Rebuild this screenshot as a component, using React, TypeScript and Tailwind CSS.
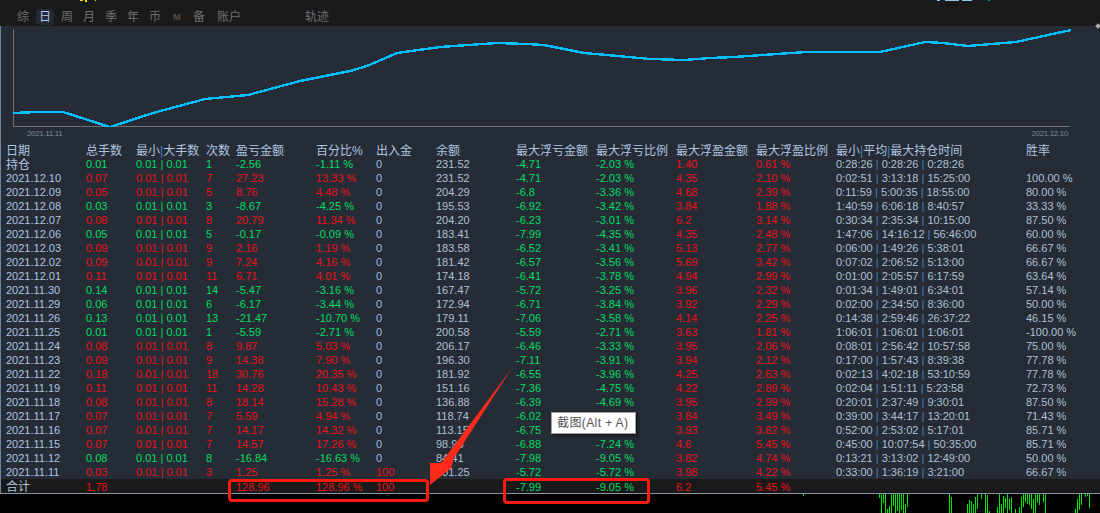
import React from "react";

const rows = [
  ["2021.12.10", "0.07", "7", "27.23", "13.33 %", "0", "231.52", "-4.71", "-2.03 %", "4.35", "2.10 %", "0:02:51 | 3:13:18 | 15:25:00", "100.00 %"],
  ["2021.12.09", "0.05", "5", "8.76", "4.48 %", "0", "204.29", "-6.8", "-3.36 %", "4.68", "2.39 %", "0:11:59 | 5:00:35 | 18:55:00", "80.00 %"],
  ["2021.12.08", "0.03", "3", "-8.67", "-4.25 %", "0", "195.53", "-6.92", "-3.42 %", "3.84", "1.88 %", "1:40:59 | 6:06:18 | 8:40:57", "33.33 %"],
  ["2021.12.07", "0.08", "8", "20.79", "11.34 %", "0", "204.20", "-6.23", "-3.01 %", "6.2", "3.14 %", "0:30:34 | 2:35:34 | 10:15:00", "87.50 %"],
  ["2021.12.06", "0.05", "5", "-0.17", "-0.09 %", "0", "183.41", "-7.99", "-4.35 %", "4.35", "2.48 %", "1:47:06 | 14:16:12 | 56:46:00", "60.00 %"],
  ["2021.12.03", "0.09", "9", "2.16", "1.19 %", "0", "183.58", "-6.52", "-3.41 %", "5.13", "2.77 %", "0:06:00 | 1:49:26 | 5:38:01", "66.67 %"],
  ["2021.12.02", "0.09", "9", "7.24", "4.16 %", "0", "181.42", "-6.57", "-3.56 %", "5.69", "3.42 %", "0:07:02 | 2:06:52 | 5:13:00", "66.67 %"],
  ["2021.12.01", "0.11", "11", "6.71", "4.01 %", "0", "174.18", "-6.41", "-3.78 %", "4.94", "2.99 %", "0:01:00 | 2:05:57 | 6:17:59", "63.64 %"],
  ["2021.11.30", "0.14", "14", "-5.47", "-3.16 %", "0", "167.47", "-5.72", "-3.25 %", "3.96", "2.32 %", "0:01:34 | 1:49:01 | 6:34:01", "57.14 %"],
  ["2021.11.29", "0.06", "6", "-6.17", "-3.44 %", "0", "172.94", "-6.71", "-3.84 %", "3.92", "2.29 %", "0:02:00 | 2:34:50 | 8:36:00", "50.00 %"],
  ["2021.11.26", "0.13", "13", "-21.47", "-10.70 %", "0", "179.11", "-7.06", "-3.58 %", "4.14", "2.25 %", "0:14:38 | 2:59:46 | 26:37:22", "46.15 %"],
  ["2021.11.25", "0.01", "1", "-5.59", "-2.71 %", "0", "200.58", "-5.59", "-2.71 %", "3.63", "1.81 %", "1:06:01 | 1:06:01 | 1:06:01", "-100.00 %"],
  ["2021.11.24", "0.08", "8", "9.87", "5.03 %", "0", "206.17", "-6.46", "-3.33 %", "3.95", "2.06 %", "0:08:01 | 2:56:42 | 10:57:58", "75.00 %"],
  ["2021.11.23", "0.09", "9", "14.38", "7.90 %", "0", "196.30", "-7.11", "-3.91 %", "3.94", "2.12 %", "0:17:00 | 1:57:43 | 8:39:38", "77.78 %"],
  ["2021.11.22", "0.18", "18", "30.76", "20.35 %", "0", "181.92", "-6.55", "-3.96 %", "4.25", "2.63 %", "0:02:13 | 4:02:18 | 53:10:59", "77.78 %"],
  ["2021.11.19", "0.11", "11", "14.28", "10.43 %", "0", "151.16", "-7.36", "-4.75 %", "4.22", "2.89 %", "0:02:04 | 1:51:11 | 5:23:58", "72.73 %"],
  ["2021.11.18", "0.08", "8", "18.14", "15.28 %", "0", "136.88", "-6.39", "-4.69 %", "3.95", "2.99 %", "0:20:01 | 2:37:49 | 9:30:01", "87.50 %"],
  // the tooltip hides the max-loss ratio on the next two rows
  ["2021.11.17", "0.07", "7", "5.59", "4.94 %", "0", "118.74", "-6.02", "", "3.84", "3.49 %", "0:39:00 | 3:44:17 | 13:20:01", "71.43 %"],
  ["2021.11.16", "0.07", "7", "14.17", "14.32 %", "0", "113.15", "-6.75", "", "3.93", "3.62 %", "0:52:00 | 2:53:02 | 5:17:01", "85.71 %"],
  ["2021.11.15", "0.07", "7", "14.57", "17.26 %", "0", "98.96", "-6.88", "-7.24 %", "4.6", "5.45 %", "0:45:00 | 10:07:54 | 50:35:00", "85.71 %"],
  ["2021.11.12", "0.08", "8", "-16.84", "-16.63 %", "0", "84.41", "-7.98", "-9.05 %", "3.82", "4.74 %", "0:13:21 | 3:13:02 | 12:49:00", "50.00 %"],
  ["2021.11.11", "0.03", "3", "1.25", "1.25 %", "100", "101.25", "-5.72", "-5.72 %", "3.98", "4.22 %", "0:33:00 | 1:36:19 | 3:21:00", "66.67 %"],
];

const headers = ["日期", "总手数", "最小|大手数", "次数", "盈亏金额", "百分比%", "出入金", "余额", "最大浮亏金额", "最大浮亏比例", "最大浮盈金额", "最大浮盈比例", "最小|平均|最大持仓时间", "胜率"];
const tabs = ["综", "日", "周", "月", "季", "年", "币", "M", "备"];

const gridCols = "grid grid-cols-[80px_50px_70px_30px_80px_60px_60px_80px_80px_80px_80px_80px_190px_1fr] pl-[5px] h-[14px] leading-[14px] whitespace-nowrap";
const RED = "text-[#ea1018]";
const GREEN = "text-[#00dc64]";
const PALE = "text-[#b0c0d4]";

// x, top, bottom of the little green bars under the table
const bars = [
  [803, 494, 496], [879, 494, 498], [881, 494, 513], [883, 494, 503], [885, 494, 513], [887, 509, 513], [889, 506, 513], [891, 494, 513],
  [893, 494, 506], [895, 494, 513], [897, 494, 511], [899, 494, 513], [901, 494, 510], [903, 494, 513], [905, 504, 513], [907, 494, 507],
  [949, 494, 513], [951, 497, 513], [967, 504, 513], [969, 500, 513], [971, 501, 513], [973, 504, 513], [975, 497, 513], [977, 494, 509],
  [981, 494, 499], [985, 494, 513], [987, 495, 513], [989, 511, 513], [997, 507, 513], [999, 494, 513], [1001, 504, 513], [1003, 496, 513],
  [1005, 498, 508], [1007, 494, 513], [1009, 499, 510], [1011, 497, 513], [1015, 509, 513], [1019, 507, 513], [1021, 497, 513], [1023, 494, 507],
  [1025, 494, 502], [1027, 494, 504], [1029, 494, 505], [1031, 494, 509], [1033, 499, 513], [1035, 494, 513], [1037, 494, 503], [1039, 494, 505],
  [1043, 494, 502], [1045, 494, 513], [1075, 509, 513], [1077, 499, 513], [1079, 494, 510], [1081, 494, 505], [1085, 494, 497], [1087, 494, 496], [1089, 494, 508],
];

const linePoints = "13,113 38,112 63,112 110,127 153,113 205,99 248,95 300,81 350,71 367,66 397,53 440,47 497,43 527,44 544,45 584,53 607,55 650,59 684,60 710,58 734,57 806,52 880,52 925,42 943,43 968,46 1016,42 1071,30";

function Piped({ value, sep }: { value: string; sep: string }) {
  const parts = value.split(sep);
  return (
    <span>
      {parts.map((p, i) => (
        <React.Fragment key={i}>
          {i > 0 && <span className="text-[#4a80bd]">{sep}</span>}
          {p}
        </React.Fragment>
      ))}
    </span>
  );
}

function Row({ r }: { r: string[] }) {
  const pnl = r[3].startsWith("-") ? GREEN : RED;
  return (
    <div className={gridCols}>
      <span className="text-[#b0c4e0]">{r[0]}</span>
      <span className={pnl}>{r[1]}</span>
      <span className={pnl}>0.01 | 0.01</span>
      <span className={pnl}>{r[2]}</span>
      <span className={pnl}>{r[3]}</span>
      <span className={pnl}>{r[4]}</span>
      <span className={r[5] === "0" ? "text-[#9cbce4]" : RED}>{r[5]}</span>
      <span className={PALE}>{r[6]}</span>
      <span className={GREEN}>{r[7]}</span>
      <span className={GREEN}>{r[8]}</span>
      <span className={RED}>{r[9]}</span>
      <span className={RED}>{r[10]}</span>
      <span className={PALE}>
        <Piped value={r[11]} sep=" | " />
      </span>
      <span className={PALE}>{r[12]}</span>
    </div>
  );
}

export default function App() {
  return (
    <div className="relative w-[1100px] h-[513px] overflow-hidden bg-black flex flex-col text-[11px] font-['Liberation_Sans','Noto_Sans_CJK_SC',sans-serif]">
      {/* ---------- top tabs ---------- */}
      <div className="h-[26px] bg-[#1a1a1a] flex items-end pl-[17px] pb-[1px] text-[12px] leading-[16px] text-[#6f6f6f]">
        {tabs.map((t) =>
          t === "日" ? (
            <span key={t} className="w-[18px] -mx-[3px] mr-[7px] h-[16px] text-center rounded-sm bg-[#212a35] text-[#b4c8e4]">{t}</span>
          ) : t === "M" ? (
            <span key={t} className="w-[12px] mr-[10px] text-center text-[9px] font-bold text-[#5a5048]">{t}</span>
          ) : (
            <span key={t} className="w-[12px] mr-[10px]">{t}</span>
          )
        )}
        <span className="ml-[2px]">账户</span>
        <span className="ml-[64px]">轨迹</span>
      </div>

      {/* ---------- body ---------- */}
      <div className="h-[467px] bg-[#252c35] border-l border-[#6f84a3] flex flex-col">
        <svg viewBox="1 26 1099 101" className="w-[1099px] h-[101px] shrink-0" shapeRendering="crispEdges">
          <path d="M13 29V126.5H1070" fill="none" stroke="#727272" strokeWidth="1" />
          <polyline points={linePoints} fill="none" stroke="#00bfff" strokeWidth="2.4" />
        </svg>
        <div className="h-[16px] flex justify-between pl-[26px] pr-[32px] text-[8px] leading-[14px] tracking-[-0.35px] text-[#7b8796]">
          <span>2021.11.11</span>
          <span>2021.12.10</span>
        </div>

        <div className={gridCols + " text-[12px] text-[#b0c4e0] [&>span]:leading-[16px]"}>
          {headers.map((h) => (
            <Piped key={h} value={h} sep="|" />
          ))}
        </div>

        <div className={gridCols}>
          <span className="text-[12px] leading-[16px] text-[#b0c4e0]">持仓</span>
          <span className={GREEN}>0.01</span>
          <span className={GREEN}>0.01 | 0.01</span>
          <span className={GREEN}>1</span>
          <span className={GREEN}>-2.56</span>
          <span className={GREEN}>-1.11 %</span>
          <span className="text-[#9cbce4]">0</span>
          <span className={PALE}>231.52</span>
          <span className={GREEN}>-4.71</span>
          <span className={GREEN}>-2.03 %</span>
          <span className={RED}>1.40</span>
          <span className={RED}>0.61 %</span>
          <span className={PALE}>
            <Piped value="0:28:26 | 0:28:26 | 0:28:26" sep=" | " />
          </span>
          <span />
        </div>

        {rows.map((r) => (
          <Row key={r[0]} r={r} />
        ))}

        {/* total row */}
        <div className={gridCols + " bg-[#1a1a1a] [&>span]:leading-[16px]"}>
          <span className="text-[12px] text-[#b0c4e0]">合计</span>
          <span className={RED}>1.78</span>
          <span />
          <span />
          <span className={RED}>128.96</span>
          <span className={RED}>128.96 %</span>
          <span className={RED}>100</span>
          <span />
          <span className={GREEN}>-7.99</span>
          <span className={GREEN}>-9.05 %</span>
          <span className={RED}>6.2</span>
          <span className={RED}>5.45 %</span>
          <span />
          <span />
        </div>
      </div>
      <div className="h-px bg-[#8a94a4]" />

      {/* ---------- green bars ---------- */}
      <svg viewBox="0 494 1100 19" className="w-[1100px] h-[19px] shrink-0" shapeRendering="crispEdges">
        {bars.map(([x, a, b]) => (
          <rect key={x} x={x} y={a} width="1" height={b - a} fill="#00e600" />
        ))}
      </svg>

      {/* ---------- clipped bits at top edge ---------- */}
      <div className="absolute left-[80px] top-0 w-[3px] h-px bg-[#f0e000]" />
      <div className="absolute left-[85px] top-0 w-[2px] h-[2px] bg-[#f0e000]" />
      <div className="absolute left-[95px] top-0 w-[1px] h-px bg-[#f0e000]" />
      <div className="absolute left-[937px] top-0 w-[3px] h-px bg-[#8fc8f0]" />
      <div className="absolute left-[945px] top-0 w-[14px] h-px bg-[#8fc8f0]" />
      <div className="absolute left-[962px] top-0 w-[10px] h-px bg-[#8fc8f0]" />
      <div className="absolute left-[988px] top-0 w-[2px] h-px bg-[#2b8aa8]" />
      <div className="absolute left-[1096px] top-[24px] w-[4px] h-[4px] rotate-45 bg-[#b0b0b0]" />

      {/* ---------- annotations over the table ---------- */}
      <svg viewBox="0 0 1100 513" className="absolute inset-0 w-[1100px] h-[513px] pointer-events-none">
        <polygon points="512,368 454,458 451,468 430,485 430,463 441,463" fill="#ff2a1a" />
      </svg>
      <div className="absolute left-[228px] top-[479px] w-[201px] h-[23px] border-[3px] border-[#ff1a10] rounded-sm" />
      <div className="absolute left-[503px] top-[478px] w-[147px] h-[26px] border-[3px] border-[#ff1a10] rounded-sm" />
      <div className="absolute left-[551px] top-[412px] w-[85px] h-[22px] pl-[5px] bg-white border border-[#a0a0a0] shadow-[2px_2px_3px_rgba(0,0,0,0.5)] text-[12px] tracking-[0.4px] leading-[20px] text-[#555]">
        截图(Alt + A)
      </div>
    </div>
  );
}
